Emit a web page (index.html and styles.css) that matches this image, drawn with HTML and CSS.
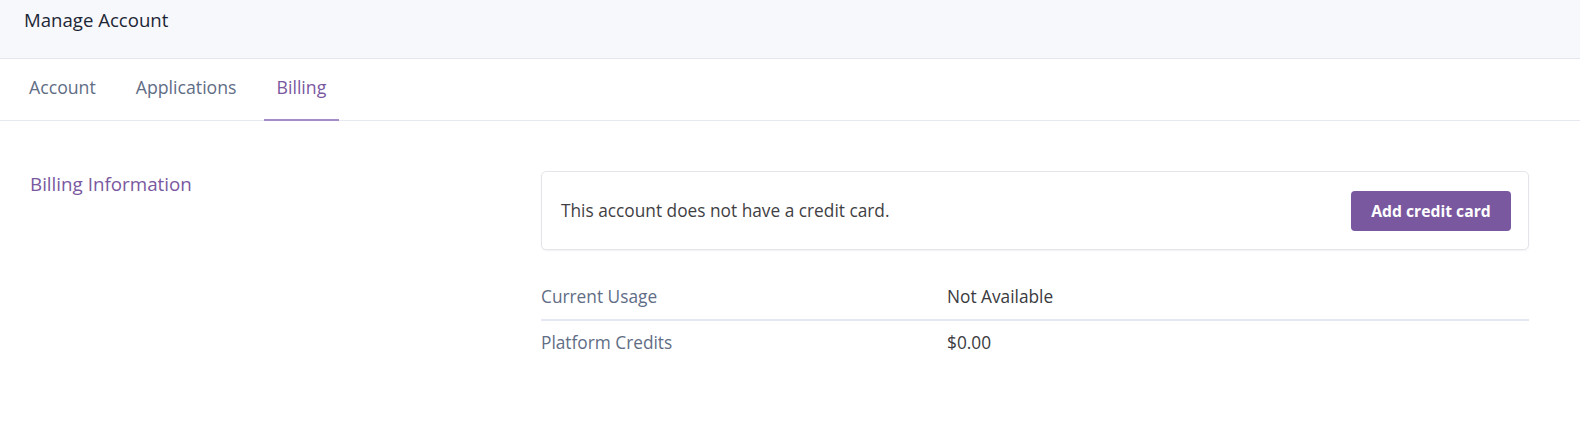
FILE: index.html
```html
<!DOCTYPE html>
<html>
<head>
<meta charset="utf-8">
<link rel="stylesheet" href="styles.css">
</head>
<body>
<header class="page-header">
  <h1 class="page-title">Manage Account</h1>
</header>
<nav class="tabs">
  <a class="tab">Account</a>
  <a class="tab">Applications</a>
  <a class="tab tab-active">Billing</a>
</nav>
<main class="content">
  <section class="section">
    <h2 class="section-title">Billing Information</h2>
    <div class="section-body">
      <div class="card">
        <p class="card-text">This account does not have a credit card.</p>
        <button class="btn-primary">Add credit card</button>
      </div>
      <div class="info-list">
        <div class="info-row">
          <span class="info-label">Current Usage</span>
          <span class="info-value">Not Available</span>
        </div>
        <div class="info-row">
          <span class="info-label">Platform Credits</span>
          <span class="info-value">$0.00</span>
        </div>
      </div>
    </div>
  </section>
</main>
</body>
</html>
```
FILE: styles.css
```css
* { box-sizing: border-box; }
body {
  margin: 0;
  font-family: "Open Sans", Lato, sans-serif;
  background: #fff;
  color: #3f3f44;
}
.page-header {
  height: 59px;
  background: #f7f8fb;
  border-bottom: 1px solid #e3e6ee;
  padding: 0 24px;
}
.page-title {
  margin: 0;
  font-size: 18.6px;
  font-weight: 400;
  line-height: 40px;
  color: #1c2636;
}
.tabs {
  display: flex;
  height: 62px;
  border-bottom: 1px solid #e6e9f0;
  padding-left: 16px;
}
.tab {
  display: flex;
  align-items: center;
  padding: 0 13px;
  margin-right: 14px;
  font-size: 17.7px;
  color: #5f6d85;
  border-bottom: 2px solid transparent;
  margin-bottom: -1px;
  padding-bottom: 4px;
}
.tab-active {
  color: #79589f;
  border-bottom-color: #a68cc9;
}
.content {
  padding: 50px 51px 0 30px;
}
.section {
  display: flex;
}
.section-title {
  width: 511px;
  margin: 0;
  font-size: 18.8px;
  font-weight: 400;
  color: #79589f;
}
.section-body {
  flex: 1;
}
.card {
  display: flex;
  align-items: center;
  justify-content: space-between;
  height: 79px;
  border: 1px solid #e3e5ea;
  border-radius: 5px;
  box-shadow: 0 1px 2px rgba(0,0,0,0.06);
  padding: 0 17px 0 19px;
}
.card-text {
  margin: 0;
  font-size: 17.3px;
  color: #3f3f44;
}
.btn-primary {
  height: 40px;
  width: 160px;
  border: 0;
  border-radius: 4px;
  background: #79589f;
  color: #fff;
  font-family: "Open Sans", sans-serif;
  font-weight: 700;
  font-size: 15.7px;
}
.info-list {
  margin-top: 24px;
}
.info-row {
  display: flex;
  align-items: center;
  height: 45px;
  font-size: 17.3px;
}
.info-row + .info-row {
  border-top: 2px solid #e5e8f2;
}
.info-label {
  width: 406px;
  color: #5f6d85;
}
.info-value {
  color: #3a3a40;
}
```
